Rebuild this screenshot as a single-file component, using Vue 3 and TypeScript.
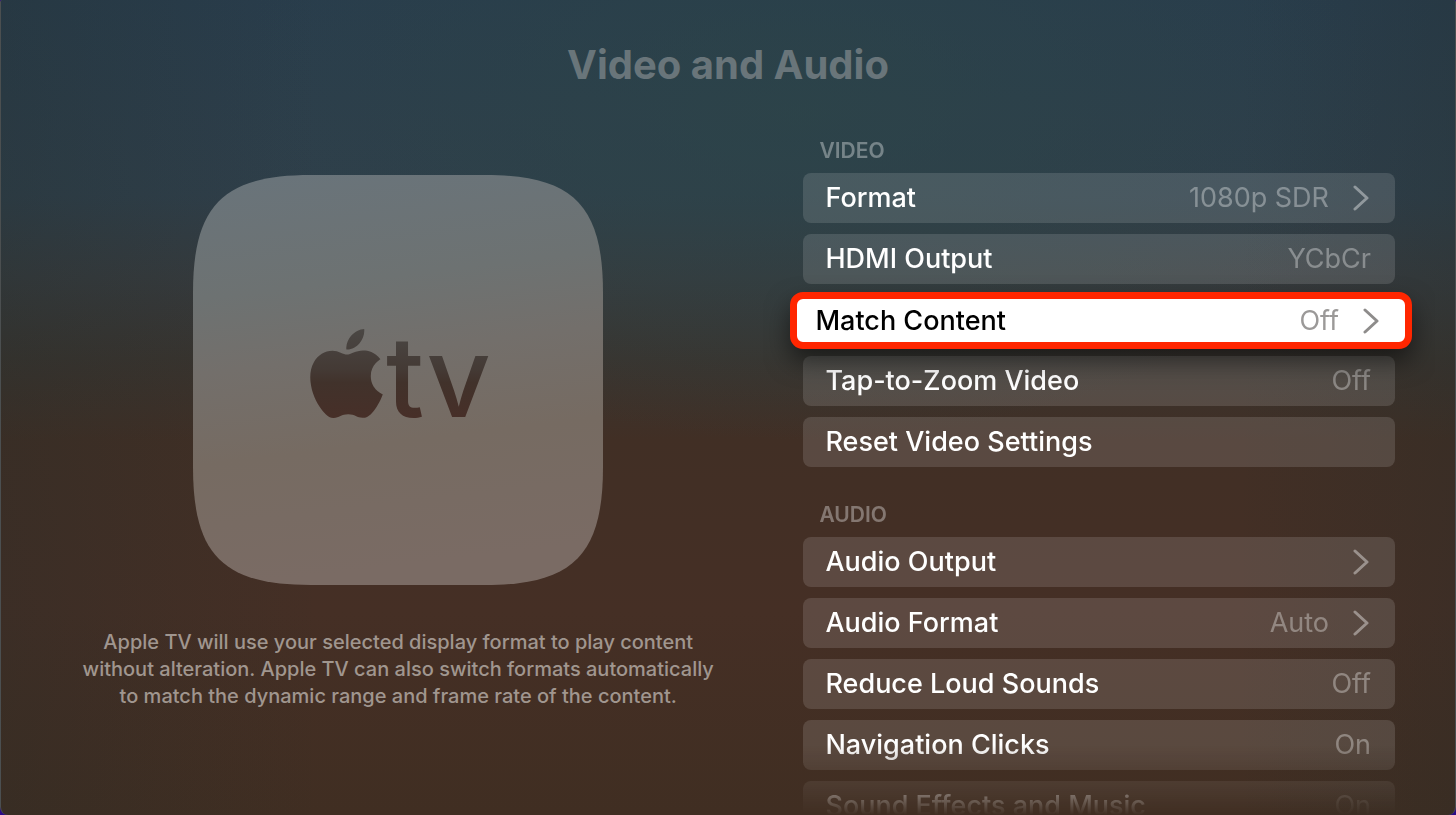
<script setup lang="ts">
interface Setting {
  name: string
  value?: string
  more?: boolean
  focused?: boolean
}

interface Group {
  id: string
  title: string
  settings: Setting[]
}

const groups: Group[] = [
  {
    id: 'video',
    title: 'VIDEO',
    settings: [
      { name: 'Format', value: '1080p SDR', more: true },
      { name: 'HDMI Output', value: 'YCbCr' },
      { name: 'Match Content', value: 'Off', more: true, focused: true },
      { name: 'Tap-to-Zoom Video', value: 'Off' },
      { name: 'Reset Video Settings' },
    ],
  },
  {
    id: 'audio',
    title: 'AUDIO',
    settings: [
      { name: 'Audio Output', more: true },
      { name: 'Audio Format', value: 'Auto', more: true },
      { name: 'Reduce Loud Sounds', value: 'Off' },
      { name: 'Navigation Clicks', value: 'On' },
      { name: 'Sound Effects and Music', value: 'On' },
    ],
  },
]
</script>

<template>
  <main class="screen">
    <h1 class="title">Video and Audio</h1>
    <div class="columns">
      <section class="about">
        <svg class="tile" viewBox="0 0 410 410" role="img" aria-label="Apple TV">
          <defs>
            <linearGradient id="tile-fill" x1="0" y1="0" x2="0.12" y2="1">
              <stop offset="0" stop-color="#69747b" />
              <stop offset="0.3" stop-color="#6d7272" />
              <stop offset="0.48" stop-color="#736f6b" />
              <stop offset="0.7" stop-color="#766b62" />
              <stop offset="1" stop-color="#7a6b64" />
            </linearGradient>
            <linearGradient id="logo-fill" gradientUnits="userSpaceOnUse" x1="0" y1="154" x2="0" y2="243">
              <stop offset="0" stop-color="#4a4744" />
              <stop offset="0.45" stop-color="#443a35" />
              <stop offset="0.6" stop-color="#41322b" />
              <stop offset="1" stop-color="#472f28" />
            </linearGradient>
            <linearGradient id="apple-fill" gradientUnits="userSpaceOnUse" x1="0" y1="0" x2="0" y2="24">
              <stop offset="0" stop-color="#4a4744" />
              <stop offset="0.45" stop-color="#443a35" />
              <stop offset="0.6" stop-color="#41322b" />
              <stop offset="1" stop-color="#472f28" />
            </linearGradient>
          </defs>
          <path
            fill="url(#tile-fill)"
            d="M0 118C0 30 30 0 118 0H292C380 0 410 30 410 118V292C410 380 380 410 292 410H118C30 410 0 380 0 292Z"
          />
          <svg x="109" y="154" width="89" height="89" viewBox="0 0 24 24">
            <path
              fill="url(#apple-fill)"
              d="M12.152 6.896c-.948 0-2.415-1.078-3.96-1.04-2.04.027-3.91 1.183-4.961 3.014-2.117 3.675-.546 9.103 1.519 12.09 1.013 1.454 2.208 3.09 3.792 3.039 1.52-.065 2.09-.987 3.935-.987 1.831 0 2.35.987 3.96.948 1.637-.026 2.676-1.48 3.676-2.948 1.156-1.688 1.636-3.325 1.662-3.415-.039-.013-3.182-1.221-3.22-4.857-.026-3.04 2.48-4.494 2.597-4.559-1.429-2.09-3.623-2.324-4.39-2.376-2-.156-3.675 1.09-4.61 1.09zM15.53 3.83c.843-1.012 1.4-2.427 1.245-3.83-1.207.052-2.662.805-3.532 1.818-.78.896-1.454 2.338-1.273 3.714 1.338.104 2.715-.688 3.559-1.701z"
            />
          </svg>
          <text class="wordmark" x="193" y="242" fill="url(#logo-fill)">tv</text>
        </svg>
        <p class="blurb">
          Apple TV will use your selected display format to play content without alteration. Apple TV can
          also switch formats automatically to match the dynamic range and frame rate of the content.
        </p>
      </section>

      <div class="settings">
        <section v-for="group in groups" :key="group.id" class="group" :aria-labelledby="group.id">
          <h2 :id="group.id" class="group-title">{{ group.title }}</h2>
          <ul class="rows">
            <li v-for="setting in group.settings" :key="setting.name">
              <button type="button" class="row" :class="{ focused: setting.focused, more: setting.more }">
                <span class="name">{{ setting.name }}</span>
                <span v-if="setting.value" class="value">{{ setting.value }}</span>
                <svg v-if="setting.more" class="chevron" viewBox="0 0 16 26" aria-hidden="true">
                  <path d="M2 2 L14 13 L2 24" />
                </svg>
              </button>
            </li>
          </ul>
        </section>
      </div>
    </div>
  </main>
</template>

<style>
body {
  margin: 0;
  background: #2b0a86;
}
</style>

<style scoped>
.screen {
  box-sizing: border-box;
  height: 100vh;
  overflow: hidden;
  padding: 40px 60px 0;
  border: 1px solid #4b4f50;
  border-width: 0 1px;
  border-radius: 2px 2px 8px 8px;
  font-family: Inter, "Liberation Sans", sans-serif;
  background:
    radial-gradient(ellipse 40% 40% at 55% 14%, rgba(44, 70, 72, 0.6), rgba(44, 70, 72, 0)),
    linear-gradient(90deg, rgba(32, 42, 40, 0.25), rgba(32, 42, 40, 0) 22%, rgba(32, 42, 40, 0) 85%, rgba(32, 42, 40, 0.22)),
    linear-gradient(180deg, #293d4c 0%, #2f3f4a 24%, #363b3e 34%, #39342f 44%, #412f25 54%, #452f25 75%, #402e22 100%);
}

.title {
  margin: 0;
  text-align: center;
  font-size: 40px;
  line-height: 50px;
  font-weight: 700;
  color: #69757a;
}

.columns {
  display: grid;
  grid-template-columns: 675fr 592fr;
  column-gap: 68px;
  align-items: start;
}

.about {
  display: flex;
  flex-direction: column;
  align-items: center;
  padding-top: 85px;
}

.tile {
  width: 410px;
  height: 410px;
}

.wordmark {
  font-size: 112px;
  font-weight: 500;
}

.blurb {
  margin: 44px 0 0;
  max-width: 650px;
  text-align: center;
  text-wrap: pretty;
  font-size: 20px;
  line-height: 27px;
  font-weight: 500;
  color: #a0968f;
}

.settings {
  height: calc(100vh - 90px);
  margin: 0 -40px;
  padding: 0 40px;
  mask-image: linear-gradient(180deg, #000 calc(100% - 70px), rgba(0, 0, 0, 0.5) calc(100% - 32px), transparent);
}

.group {
  padding-top: 46px;
}

.group + .group {
  padding-top: 33px;
}

.group-title {
  margin: 0;
  padding: 1px 16px 8px;
  font-size: 21px;
  line-height: 28px;
  font-weight: 600;
  color: rgba(255, 255, 255, 0.35);
}

.rows {
  display: grid;
  gap: 11px;
  margin: 0;
  padding: 0;
  list-style: none;
}

.rows li {
  display: flex;
  height: 50px;
}

.row {
  box-sizing: border-box;
  flex: 1;
  display: flex;
  align-items: center;
  gap: 24px;
  border: 0;
  border-radius: 8px;
  padding: 0 24px 0 22px;
  font: inherit;
  font-size: 27px;
  line-height: 32px;
  font-weight: 500;
  text-align: left;
  color: #fff;
  background: rgba(255, 255, 255, 0.13);
}

.row.more {
  padding-right: 26px;
}

.name {
  flex: 1;
}

.value {
  font-weight: 400;
  color: rgba(255, 255, 255, 0.34);
}

.chevron {
  width: 16px;
  height: 26px;
  fill: none;
  stroke: rgba(255, 255, 255, 0.4);
  stroke-width: 3;
  stroke-linecap: round;
  stroke-linejoin: round;
}

.row.focused {
  position: relative;
  margin: -3px -17px -4px -13px;
  border: 7px solid #ff2600;
  border-radius: 13px;
  padding-left: 18px;
  color: #000;
  background: #fff;
  box-shadow: 0 12px 24px rgba(0, 0, 0, 0.5);
}

.row.focused .value {
  color: #9b9998;
}

.row.focused .chevron {
  stroke: #8e8c8b;
}
</style>
